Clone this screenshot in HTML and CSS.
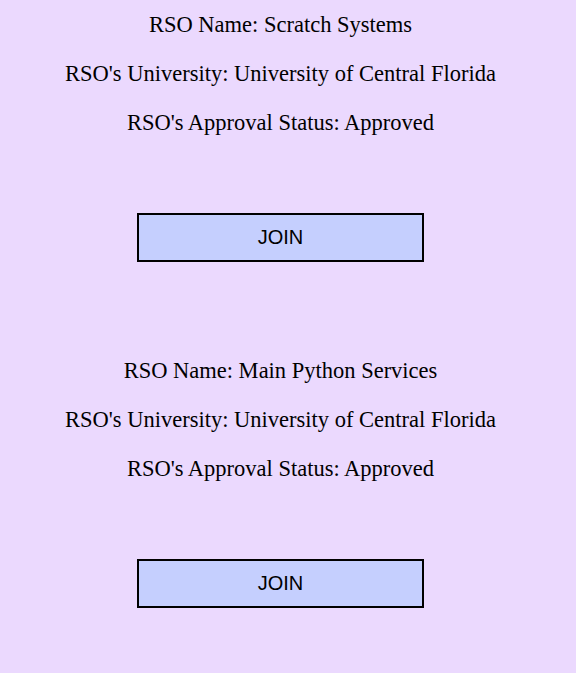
FILE: index.html
```html
<!DOCTYPE html>
<html>
<head>
<meta charset="utf-8">
<link rel="stylesheet" href="styles.css">
</head>
<body>
<div class="page">
  <div class="card">
    <p class="line">RSO Name: Scratch Systems</p>
    <p class="line">RSO's University: University of Central Florida</p>
    <p class="line">RSO's Approval Status: Approved</p>
    <button class="join">JOIN</button>
  </div>
  <div class="card">
    <p class="line">RSO Name: Main Python Services</p>
    <p class="line">RSO's University: University of Central Florida</p>
    <p class="line">RSO's Approval Status: Approved</p>
    <button class="join">JOIN</button>
  </div>
</div>
</body>
</html>
```
FILE: styles.css
```css
html, body {
  margin: 0;
  padding: 0;
  background: #ebd9fe;
}
body {
  font-family: "Liberation Serif", "Times New Roman", serif;
  color: #000;
}
.page {
  width: 561px;
  padding-top: 12px;
  display: flex;
  flex-direction: column;
  gap: 96px;
}
.card {
  display: flex;
  flex-direction: column;
  align-items: center;
}
.line {
  margin: 0 0 23px;
  font-size: 22.5px;
  line-height: 26px;
  white-space: nowrap;
}
.line:nth-of-type(3) {
  margin-bottom: 0;
}
.join {
  margin-top: 77px;
  width: 287px;
  height: 49px;
  box-sizing: border-box;
  border: 2px solid #000;
  background: #c5cffe;
  font-family: "Liberation Sans", Arial, sans-serif;
  font-size: 20px;
  color: #000;
  padding: 0;
}
```
